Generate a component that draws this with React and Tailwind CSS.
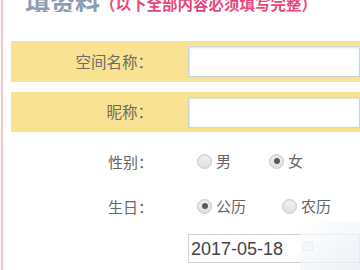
import React from 'react'

const CJK = { fontFamily: '"Noto Sans CJK SC", "Noto Sans", sans-serif' }

function Radio({ checked, label }) {
  return (
    <span className="flex items-center gap-[4px]">
      <span className="w-[15px] h-[15px] rounded-full border border-[#c9c9c9] bg-gradient-to-b from-[#f4f4f4] to-[#dedede] flex items-center justify-center shadow-[inset_0_1px_1px_rgba(0,0,0,0.08)]">
        {checked && <span className="w-[6px] h-[6px] rounded-full bg-[#5a5a5a]" />}
      </span>
      <span className="text-[15px] text-[#666]">{label}</span>
    </span>
  )
}

function YellowRow({ label, className }) {
  return (
    <div className={`flex items-center bg-[#f9e291] ${className}`}>
      <div className="w-[142px] text-right text-[15.5px] text-[#6b6b6b] leading-none">{label}</div>
      <div className="ml-[35px] flex-1 h-[31px] bg-white border border-[#c8d5df] shadow-[inset_1px_1px_2px_rgba(0,0,0,0.12)]" />
    </div>
  )
}

export default function App() {
  return (
    <div className="w-[360px] h-[270px] overflow-hidden bg-white relative" style={CJK}>
      <div className="ml-px h-full border-l-2 border-[#f6c5cb]">
        <div className="flex items-end h-[12px] overflow-hidden pl-[22px]">
          <span className="text-[25px] font-bold text-[#8d9cb0] leading-none mb-[-2px]">填资料</span>
          <span className="text-[15.5px] font-bold text-[#e9477a] leading-none mb-[1px]">（以下全部内容必须填写完整）</span>
        </div>

        <div className="pl-[8px] mt-[29px]">
          <YellowRow label="空间名称：" className="h-[41px]" />
          <YellowRow label="昵称：" className="h-[40px] mt-[10px]" />
        </div>

        <div className="flex items-center mt-[20px] h-[18px]">
          <div className="w-[150px] text-right text-[15px] text-[#666] leading-none">性别：</div>
          <div className="ml-[44px] flex items-center gap-[38px]">
            <Radio label="男" />
            <Radio checked label="女" />
          </div>
        </div>

        <div className="flex items-center mt-[27px] h-[18px]">
          <div className="w-[150px] text-right text-[15px] text-[#666] leading-none">生日：</div>
          <div className="ml-[44px] flex items-center gap-[36px]">
            <Radio checked label="公历" />
            <Radio label="农历" />
          </div>
        </div>

        <div className="flex mt-[19px] pl-[185px]">
          <div className="relative w-[180px] h-[29px] border border-[#c8d5df] flex items-center pl-[2px]">
            <span className="text-[18px] text-[#444] leading-none" style={{ fontFamily: '"Liberation Sans", sans-serif' }}>2017-05-18</span>
            <span className="absolute left-[114px] top-[7px] w-[10px] h-[9px] border border-[#cfcfcf] bg-[#f3f3f3]" />
          </div>
        </div>
      </div>
      <div className="absolute left-[300px] top-[222px] w-[60px] h-[48px] bg-gradient-to-br from-white/70 to-[#e8edf2]/80" />
    </div>
  )
}
